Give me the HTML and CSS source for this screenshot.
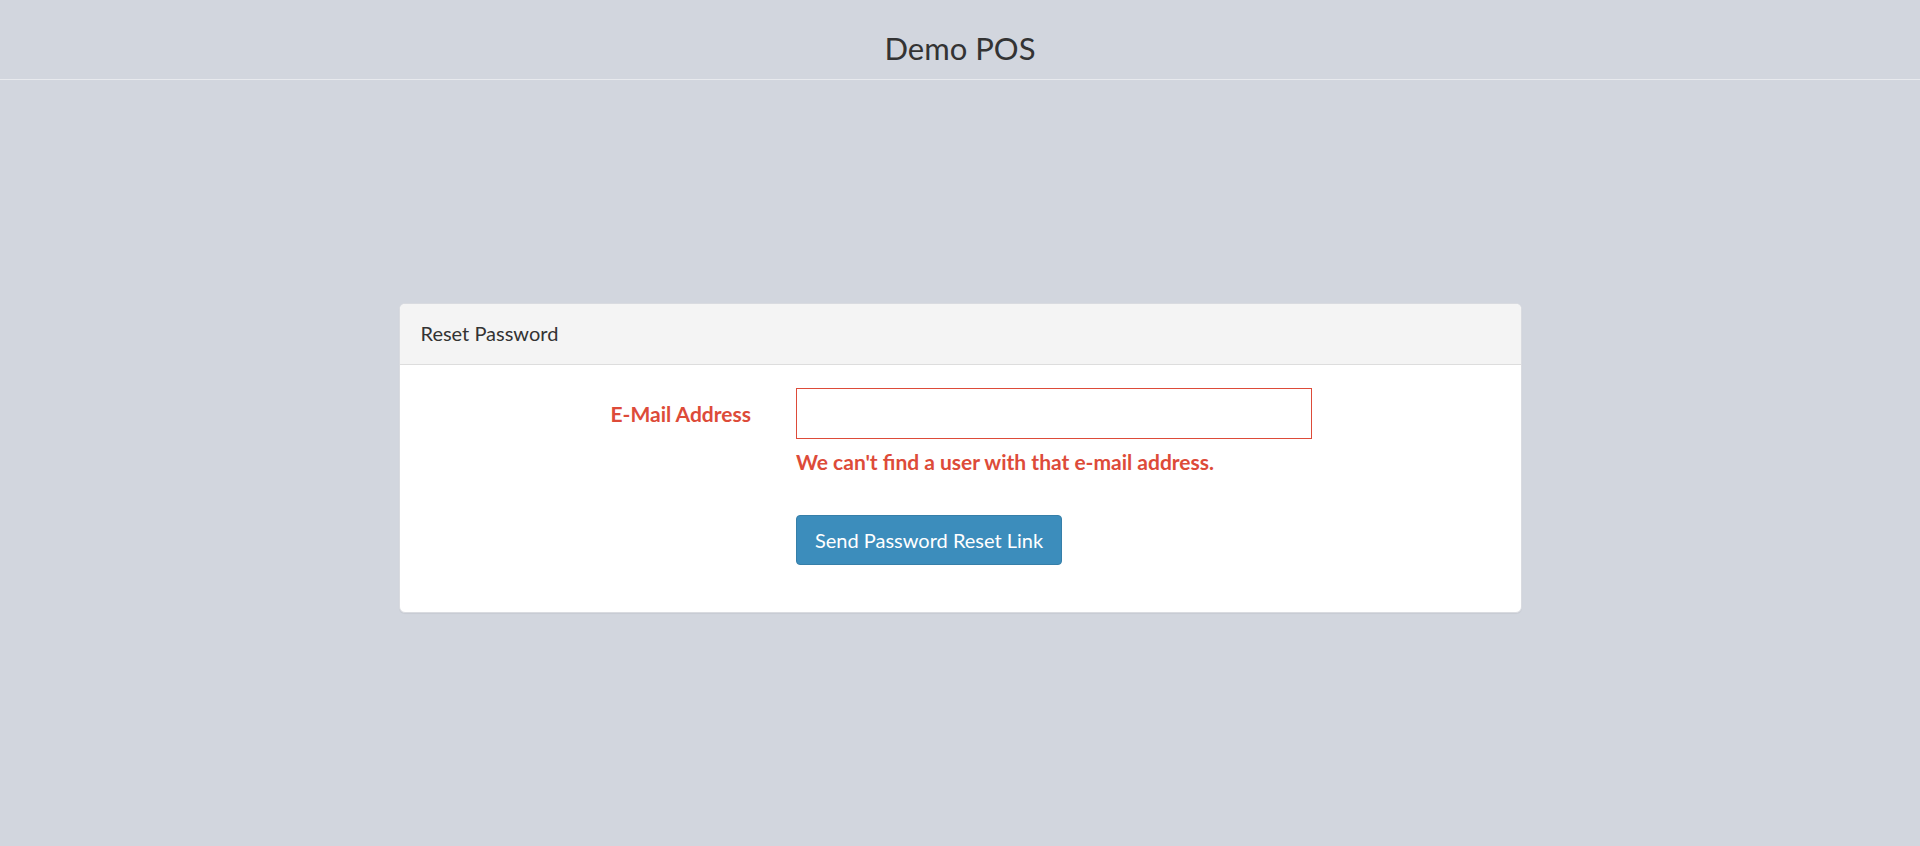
FILE: index.html
```html
<!DOCTYPE html>
<html lang="en">
<head>
<meta charset="utf-8">
<title>Demo POS - Reset Password</title>
<link rel="stylesheet" href="styles.css">
</head>
<body>
<header class="topbar">
  <div class="brand">Demo POS</div>
</header>
<main class="page">
  <section class="panel">
    <div class="panel-heading">Reset Password</div>
    <form class="panel-body">
      <div class="form-group has-error">
        <label class="control-label" for="email">E-Mail Address</label>
        <div class="control">
          <input id="email" class="form-control" type="email" name="email">
          <span class="help-block">We can't find a user with that e-mail address.</span>
        </div>
      </div>
      <div class="form-group">
        <div class="spacer"></div>
        <div class="control">
          <button type="button" class="btn btn-primary">Send Password Reset Link</button>
        </div>
      </div>
    </form>
  </section>
</main>
</body>
</html>
```

FILE: styles.css
```css
* { box-sizing: border-box; }
html, body { margin: 0; padding: 0; }
body {
  background: #d2d6de;
  font-family: "Lato", "Liberation Sans", sans-serif;
  font-size: 21px;
  line-height: 30px;
  color: #333;
  min-height: 846px;
}
.topbar {
  height: 80px;
  border-bottom: 1px solid #e8eaee;
  display: flex;
  justify-content: center;
  align-items: center;
  padding-top: 16px;
}
.brand {
  font-size: 31px;
  line-height: 40px;
  color: #333;
}
.page {
  width: 1123px;
  margin: 223px auto 0;
}
.panel {
  background: #fff;
  border: 1px solid #d9dbe0;
  border-radius: 6px;
  box-shadow: 0 1px 1px rgba(0,0,0,0.05);
  overflow: hidden;
}
.panel-heading {
  background: #f4f4f4;
  border-bottom: 1px solid #dddddd;
  padding: 14px 20px 16px 21px;
  height: 61px;
  font-size: 20px;
  line-height: 30px;
  color: #333;
}
.panel-body {
  padding: 23px 0 24px;
  margin: 0;
}
.form-group {
  display: grid;
  grid-template-columns: 374px 516px;
  column-gap: 22.5px;
  margin-bottom: 22.5px;
}
.control-label {
  text-align: right;
  padding: 10.5px 22.5px 0 0;
  font-weight: 700;
}
.has-error .control-label { color: #dd4b39; }
.control { display: flex; flex-direction: column; align-items: flex-start; }
.form-control {
  display: block;
  width: 100%;
  height: 51px;
  padding: 9px 18px;
  font: inherit;
  border: 1px solid #d2d6de;
  border-radius: 0;
  background: #fff;
  outline: none;
}
.has-error .form-control { border-color: #dd4b39; }
.help-block {
  display: block;
  margin: 7.5px 0 16px;
  font-weight: 700;
  color: #dd4b39;
}
.btn {
  font: inherit;
  font-size: 20px;
  line-height: 30px;
  padding: 9px 18px;
  border-radius: 4px;
  cursor: pointer;
  height: 50px;
}
.btn-primary {
  background: #3c8dbc;
  border: 1px solid #367fa9;
  color: #fff;
}
```
